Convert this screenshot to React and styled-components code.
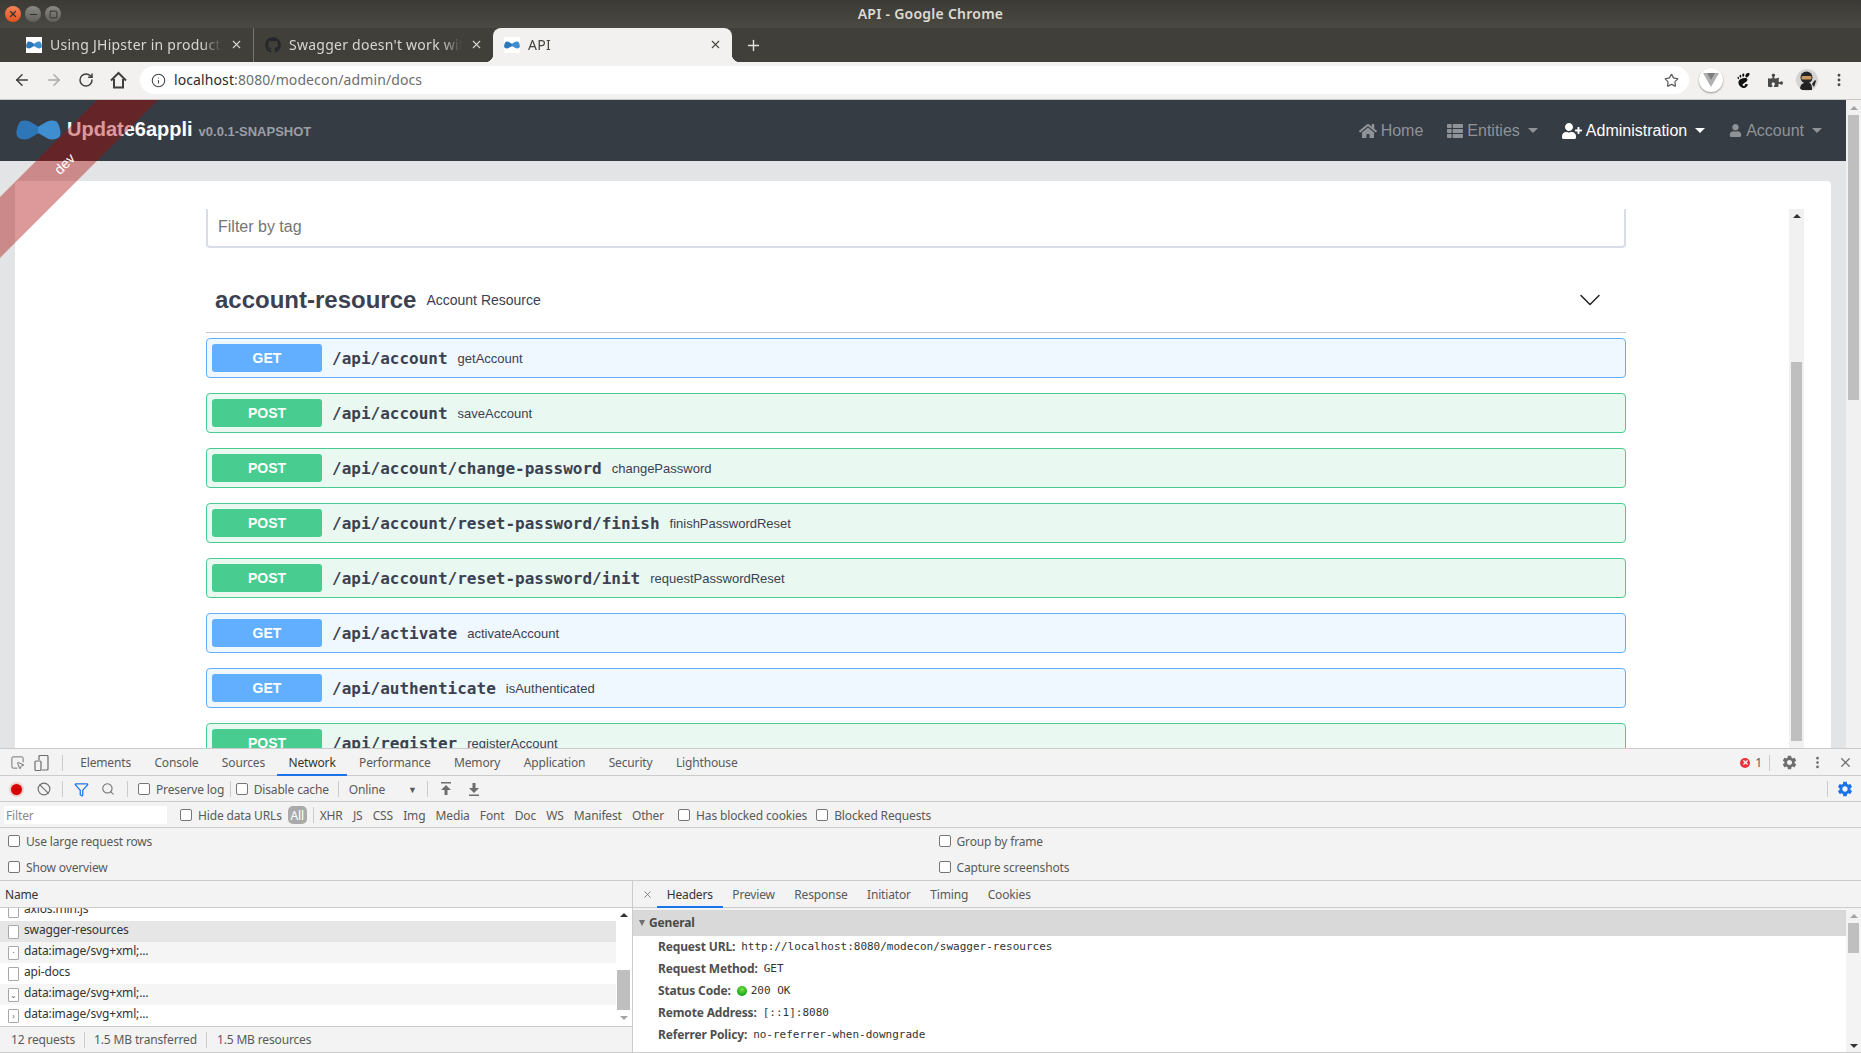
import React from "react";
import styled, { createGlobalStyle } from "styled-components";
import {
  ArrowLeft,
  ArrowRight,
  RotateCw,
  Info,
  Star,
  EllipsisVertical,
  X,
  Plus,
  Minus,
  Square,
  ChevronDown,
  Ban,
  Search,
  Filter,
  SquareMousePointer,
} from "lucide-react";
import { FaGithub, FaHome, FaThList, FaUserPlus, FaUser, FaPuzzlePiece } from "react-icons/fa";
import { MdSettings } from "react-icons/md";
import { SiGnome } from "react-icons/si";

const UI = `"Noto Sans", "Open Sans", sans-serif`;
const SANS = `"Liberation Sans", Arial, sans-serif`;
const MONO = `"DejaVu Sans Mono", "Liberation Mono", monospace`;

const operations = [
  { method: "GET", path: "/api/account", name: "getAccount" },
  { method: "POST", path: "/api/account", name: "saveAccount" },
  { method: "POST", path: "/api/account/change-password", name: "changePassword" },
  { method: "POST", path: "/api/account/reset-password/finish", name: "finishPasswordReset" },
  { method: "POST", path: "/api/account/reset-password/init", name: "requestPasswordReset" },
  { method: "GET", path: "/api/activate", name: "activateAccount" },
  { method: "GET", path: "/api/authenticate", name: "isAuthenticated" },
  { method: "POST", path: "/api/register", name: "registerAccount" },
];

const requests = [
  { name: "axios.min.js", tone: "#fff" },
  { name: "swagger-resources", tone: "#e6e6e6" },
  { name: "data:image/svg+xml;...", tone: "#f5f5f5", mark: "·" },
  { name: "api-docs", tone: "#fff" },
  { name: "data:image/svg+xml;...", tone: "#f5f5f5", mark: "⌄" },
  { name: "data:image/svg+xml;...", tone: "#fff", mark: "›" },
];

const GlobalStyle = createGlobalStyle`
  html, body {
    margin: 0;
    padding: 0;
    background: #fff;
  }
  * {
    box-sizing: border-box;
  }
`;

const Screen = styled.div`
  width: 1861px;
  height: 1053px;
  display: flex;
  flex-direction: column;
  overflow: hidden;
  font-family: ${UI};
`;

/* window + browser chrome */
const TitleBar = styled.div`
  height: 28px;
  flex: none;
  display: flex;
  align-items: center;
  justify-content: center;
  position: relative;
  padding-bottom: 2px;
  background: linear-gradient(#3b3a36, #4a4942);
  color: #dfdbd2;
  font-size: 14px;
  font-weight: 600;
  letter-spacing: 0.25px;
`;

const WindowButtons = styled.div`
  position: absolute;
  left: 5px;
  top: 6px;
  display: flex;
  gap: 4px;
`;

const WindowButton = styled.span`
  width: 16px;
  height: 16px;
  border-radius: 50%;
  display: flex;
  align-items: center;
  justify-content: center;
  background: ${(p) => (p.$close ? "linear-gradient(#f5835a, #e0521f)" : "linear-gradient(#8a8a84, #5f5e59)")};
  color: #33322e;
`;

const TabStrip = styled.div`
  height: 34px;
  flex: none;
  display: flex;
  align-items: stretch;
  padding-left: 15px;
  background: #403f3a;
`;

const Tab = styled.div`
  width: 239px;
  display: flex;
  align-items: center;
  gap: 8px;
  padding: 0 10px 1px 11px;
  position: relative;
  font-size: 14px;
  letter-spacing: 0.25px;
  color: ${(p) => (p.$active ? "#45443f" : "#d8d6d1")};
  background: ${(p) => (p.$active ? "#f2f1ef" : "transparent")};
  border-radius: ${(p) => (p.$active ? "8px 8px 0 0" : "0")};
  border-right: ${(p) => (p.$divider ? "1px solid #77766f" : "none")};
  ${(p) =>
    p.$active &&
    `
    &::before, &::after {
      content: "";
      position: absolute;
      bottom: 0;
      width: 8px;
      height: 8px;
    }
    &::before {
      left: -8px;
      background: radial-gradient(circle at 0 0, transparent 8px, #f2f1ef 8.5px);
    }
    &::after {
      right: -8px;
      background: radial-gradient(circle at 100% 0, transparent 8px, #f2f1ef 8.5px);
    }
  `}
`;

const TabTitle = styled.span`
  flex: 1;
  min-width: 0;
  overflow: hidden;
  white-space: nowrap;
  -webkit-mask-image: linear-gradient(to right, #000 88%, transparent);
  mask-image: linear-gradient(to right, #000 88%, transparent);
`;

const NewTab = styled.div`
  margin-left: 9px;
  width: 24px;
  display: flex;
  align-items: center;
  justify-content: center;
  color: #e4e2dd;
`;

const BrowserBar = styled.div`
  height: 38px;
  flex: none;
  display: flex;
  align-items: center;
  padding: 0 10px 1px 0;
  background: #f2f1ef;
  border-bottom: 1px solid #c9c8c5;
`;

const NavButton = styled.div`
  width: 32px;
  height: 28px;
  display: flex;
  align-items: center;
  justify-content: center;
  flex: none;
  color: ${(p) => (p.$off ? "#a9a9a9" : "#3f3f3f")};
`;

const BackGroup = styled.div`
  display: flex;
  padding-left: 6px;
  margin-right: 6px;
`;

const Omnibox = styled.div`
  width: 1549px;
  height: 28px;
  flex: none;
  display: flex;
  align-items: center;
  padding: 0 10px 0 11px;
  background: #fff;
  border-radius: 14px;
  font-size: 14px;
  letter-spacing: 0.1px;
  color: #6d6d6d;
`;

const Address = styled.span`
  flex: 1;
  margin: 0 0 2px 8px;
  b {
    font-weight: 400;
    color: #2b2b2b;
  }
`;

const VueBadge = styled.div`
  width: 24px;
  height: 24px;
  border-radius: 50%;
  background: #fff;
  box-shadow: 0 1px 2px rgba(0, 0, 0, 0.4);
  display: flex;
  align-items: center;
  justify-content: center;
`;

const Avatar = styled.div`
  width: 22px;
  height: 22px;
  border-radius: 50%;
  background: #d4d4d4;
  display: flex;
  align-items: center;
  justify-content: center;
  overflow: hidden;
`;

const Extensions = styled.div`
  display: flex;
  align-items: center;
  margin-left: 6px;
`;

/* the page */
const Page = styled.div`
  height: 648px;
  flex: none;
  display: flex;
  position: relative;
  overflow: hidden;
  background: #e3e4e6;
`;

const Ribbon = styled.div`
  position: absolute;
  left: 0;
  top: 0;
  width: 300px;
  height: 300px;
  overflow: hidden;
  pointer-events: none;
`;

const RibbonBand = styled.div`
  position: absolute;
  left: -86px;
  top: 42px;
  width: 300px;
  height: 43px;
  display: flex;
  align-items: center;
  justify-content: center;
  transform: rotate(-45deg);
  background: rgba(170, 0, 0, 0.4);
  color: #fff;
  font: 14px ${SANS};
`;

const PageMain = styled.div`
  flex: 1;
  min-width: 0;
  display: flex;
  flex-direction: column;
`;

const JhipsterNav = styled.div`
  height: 61px;
  flex: none;
  display: flex;
  align-items: center;
  justify-content: space-between;
  padding: 0 24px 0 16px;
  background: #363c44;
  font-family: ${SANS};
`;

const Brand = styled.div`
  display: flex;
  align-items: center;
  padding-bottom: 2px;
  color: #fff;
`;

const BrandName = styled.span`
  margin-left: 6px;
  font-size: 20px;
  font-weight: 700;
`;

const BrandVersion = styled.span`
  margin-left: 6px;
  margin-top: 4px;
  font-size: 13px;
  font-weight: 700;
  color: #9b9fa4;
`;

const Menu = styled.div`
  display: flex;
  align-items: center;
  gap: 24px;
`;

const MenuItem = styled.div`
  display: flex;
  align-items: center;
  gap: 4px;
  font-size: 16px;
  color: ${(p) => (p.$active ? "#fff" : "#8f9296")};
`;

const Caret = styled.span`
  margin-left: 4px;
  border-top: 5px solid currentColor;
  border-left: 5px solid transparent;
  border-right: 5px solid transparent;
`;

const Card = styled.div`
  flex: 1;
  min-height: 0;
  margin: 20px 15px 0;
  padding: 28px 27px 0 191px;
  display: flex;
  background: #fff;
  border-radius: 4px 4px 0 0;
  overflow: hidden;
  font-family: ${SANS};
`;

const Swagger = styled.div`
  width: 1420px;
  flex: none;
`;

const TagFilter = styled.div`
  height: 39px;
  display: flex;
  align-items: center;
  padding: 0 0 2px 10px;
  border: 2px solid #d8dde7;
  border-top: none;
  border-radius: 0 0 4px 4px;
  font-size: 16px;
  color: #757575;
`;

const TagHeader = styled.div`
  height: 85px;
  display: flex;
  align-items: center;
  padding: 20px 18px 0 9px;
  margin-bottom: 5px;
  border-bottom: 1px solid #c6c8cf;
  color: #3b4151;
`;

const TagName = styled.span`
  font-size: 24px;
  font-weight: 700;
`;

const TagNote = styled.span`
  flex: 1;
  margin-left: 10px;
  font-size: 14px;
`;

const Operations = styled.div`
  display: flex;
  flex-direction: column;
  gap: 15px;
`;

const Operation = styled.div`
  height: 40px;
  flex: none;
  display: flex;
  align-items: center;
  padding: 0 5px;
  border: 1px solid ${(p) => (p.$method === "GET" ? "#61affe" : "#49cc90")};
  border-radius: 4px;
  background: ${(p) => (p.$method === "GET" ? "#eff7ff" : "#e9f8f1")};
  color: #3b4151;
`;

const Method = styled.span`
  width: 110px;
  height: 28px;
  flex: none;
  display: flex;
  align-items: center;
  justify-content: center;
  border-radius: 3px;
  background: ${(p) => (p.$method === "GET" ? "#61affe" : "#49cc90")};
  color: #fff;
  font-size: 14px;
  font-weight: 700;
`;

const OpPath = styled.span`
  margin-left: 10px;
  font-family: ${MONO};
  font-size: 16px;
  font-weight: 700;
`;

const OpName = styled.span`
  margin-left: 10px;
  font-size: 13px;
`;

const InnerTrack = styled.div`
  width: 15px;
  flex: none;
  margin-left: 163px;
  position: relative;
  background: #f1f1f1;
`;

const Arrow = styled.span`
  position: absolute;
  left: 50%;
  transform: translateX(-50%);
  border-left: 4px solid transparent;
  border-right: 4px solid transparent;
  ${(p) => (p.$down ? `border-top: 4px solid ${p.$color};` : `border-bottom: 4px solid ${p.$color};`)}
  ${(p) => (p.$down ? `bottom: ${p.$at}px;` : `top: ${p.$at}px;`)}
`;

const InnerThumb = styled.div`
  position: absolute;
  left: 2px;
  right: 2px;
  top: 153px;
  height: 379px;
  background: #bfbfbf;
`;

const PageTrack = styled.div`
  width: 15px;
  flex: none;
  position: relative;
  background: #f1f1f1;
`;

const PageThumb = styled.div`
  position: absolute;
  left: 2px;
  right: 2px;
  top: 15px;
  height: 285px;
  background: #bfbfbf;
`;

/* devtools */
const DevTools = styled.div`
  flex: 1;
  min-height: 0;
  display: flex;
  flex-direction: column;
  background: #f3f3f3;
  color: #5a5a5a;
  font-size: 12px;
  letter-spacing: -0.15px;
  white-space: nowrap;
`;

const Bar = styled.div`
  height: ${(p) => p.$h}px;
  flex: none;
  display: flex;
  align-items: center;
  padding-top: 1px;
  padding-left: ${(p) => p.$pad || 0}px;
  padding-right: ${(p) => p.$padRight || 0}px;
  border-top: ${(p) => (p.$top ? "1px solid #ccc" : "none")};
  border-bottom: 1px solid #ccc;
`;

const Spacer = styled.div`
  flex: 1;
`;

const Sep = styled.span`
  width: 1px;
  height: 16px;
  flex: none;
  margin: ${(p) => p.$m || "0 8px"};
  background: #ccc;
`;

const PanelTab = styled.div`
  height: 100%;
  display: flex;
  align-items: center;
  padding: 0 ${(p) => p.$pad || 11.7}px;
  margin-bottom: -1px;
  color: ${(p) => (p.$active ? "#333" : "#5a5a5a")};
  border-bottom: 2px solid ${(p) => (p.$active ? "#1a73e8" : "transparent")};
`;

const IconSlot = styled.span`
  width: ${(p) => p.$w || 28}px;
  flex: none;
  display: flex;
  align-items: center;
  justify-content: center;
  color: ${(p) => p.$color || "#6e6e6e"};
`;

const RecordDot = styled.span`
  width: 11px;
  height: 11px;
  border-radius: 50%;
  background: #d50000;
  box-shadow: 0 0 0 2px rgba(213, 0, 0, 0.15);
`;

const Check = styled.input.attrs({ type: "checkbox" })`
  appearance: none;
  width: 12px;
  height: 12px;
  flex: none;
  margin: 0 6px 0 0;
  background: #fff;
  border: 1px solid #767676;
  border-radius: 2px;
`;

const CheckLabel = styled.label`
  display: flex;
  align-items: center;
  margin-left: ${(p) => p.$left || 0}px;
`;

const FilterBox = styled.div`
  width: 163px;
  height: 18px;
  margin-left: 4px;
  padding-left: 2px;
  display: flex;
  align-items: center;
  background: #fff;
  color: #8a8a8a;
`;

const AllPill = styled.span`
  width: 19px;
  height: 18px;
  margin-left: 6px;
  display: flex;
  align-items: center;
  justify-content: center;
  border-radius: 5px;
  background: #aaa;
  color: #fff;
`;

const TypeFilters = styled.div`
  display: flex;
  gap: 10.2px;
`;

const Throttle = styled.span`
  width: 68px;
  display: flex;
  justify-content: space-between;
  align-items: center;
  i {
    font-style: normal;
    font-size: 9px;
  }
`;

const SettingsGrid = styled.div`
  height: 52px;
  flex: none;
  display: grid;
  grid-template-columns: 1fr 1fr;
  grid-auto-rows: 26px;
`;

const SettingCell = styled.div`
  display: flex;
  align-items: center;
  padding-left: 8px;
`;

const ErrorBadge = styled.span`
  width: 10px;
  height: 10px;
  border-radius: 50%;
  background: #e8333c;
  color: #fff;
  display: flex;
  align-items: center;
  justify-content: center;
  margin-right: 5px;
`;

const Split = styled.div`
  flex: 1;
  min-height: 0;
  display: flex;
  border-top: 1px solid #ccc;
  border-bottom: 1px solid #ccc;
`;

const LeftPane = styled.div`
  width: 633px;
  flex: none;
  display: flex;
  flex-direction: column;
  border-right: 1px solid #ccc;
`;

const NameHead = styled.div`
  height: 27px;
  flex: none;
  display: flex;
  align-items: center;
  padding-left: 5px;
  color: #333;
  border-bottom: 1px solid #ccc;
`;

const ListWrap = styled.div`
  flex: 1;
  min-height: 0;
  display: flex;
  overflow: hidden;
  background: #fff;
`;

const RequestList = styled.div`
  flex: 1;
  min-width: 0;
  display: flex;
  flex-direction: column;
  justify-content: flex-end;
  overflow: hidden;
`;

const RequestRow = styled.div`
  height: 21px;
  flex: none;
  display: flex;
  align-items: center;
  padding: 0 0 4px 8px;
  background: ${(p) => p.$tone};
  color: #333;
`;

const FileIcon = styled.span`
  width: 11px;
  height: 14px;
  flex: none;
  margin: 4px 5px 0 0;
  display: flex;
  align-items: center;
  justify-content: center;
  background: #fff;
  border: 1px solid #a8a8a8;
  border-radius: 1px;
  color: #666;
  font-size: 8px;
  line-height: 1;
`;

const ListTrack = styled.div`
  width: 16px;
  flex: none;
  position: relative;
  background: #fff;
`;

const ListThumb = styled.div`
  position: absolute;
  left: 1px;
  right: 2px;
  top: 62px;
  height: 40px;
  background: #bfbfbf;
`;

const StatusBar = styled.div`
  height: 26px;
  flex: none;
  display: flex;
  align-items: center;
  padding-left: 11px;
  border-top: 1px solid #ccc;
`;

const RightPane = styled.div`
  flex: 1;
  min-width: 0;
  display: flex;
  flex-direction: column;
`;

const DetailBody = styled.div`
  flex: 1;
  min-height: 0;
  display: flex;
  margin-top: 2px;
  background: #fff;
`;

const DetailMain = styled.div`
  flex: 1;
  min-width: 0;
`;

const SectionHead = styled.div`
  height: 26px;
  display: flex;
  align-items: center;
  padding: 0 0 1px 5px;
  background: #d9d9d9;
  color: #4a4a4a;
  font-weight: 700;
`;

const SectionArrow = styled.span`
  margin: 1px 4px 0 1px;
  border-top: 6px solid #6e6e6e;
  border-left: 3.5px solid transparent;
  border-right: 3.5px solid transparent;
`;

const HeaderRows = styled.div`
  padding: 0 0 0 25px;
`;

const HeaderRow = styled.div`
  height: 22px;
  display: flex;
  align-items: center;
  padding-bottom: 1px;
`;

const HeaderKey = styled.span`
  font-weight: 700;
  color: #4f4f4f;
  margin-right: 6px;
`;

const HeaderValue = styled.span`
  font-family: ${MONO};
  font-size: 11px;
  letter-spacing: 0;
  color: #333;
`;

const StatusDot = styled.span`
  width: 10px;
  height: 10px;
  margin-right: 4px;
  border-radius: 50%;
  background: radial-gradient(circle at 50% 35%, #7be04a, #12a812 70%);
`;

const DetailTrack = styled.div`
  width: 15px;
  flex: none;
  position: relative;
  background: #f3f3f3;
`;

const DetailThumb = styled.div`
  position: absolute;
  left: 2px;
  right: 2px;
  top: 13px;
  height: 30px;
  background: #bfbfbf;
`;

const Bowtie = ({ w, h }) => (
  <svg width={w} height={h} viewBox="0 0 45 20">
    <path
      d="M8 .5C13 0 18 4 23 7v6c-6 3-10 7-15 6.500-4-.5-7-1.500-7.500-5.500C0 11 2 4 4 2 5 1 6 .7 8 .5Z"
      fill="#2e76b6"
    />
    <path
      d="M37 .5C32 0 27 4 22 7v6c6 3 10 7 15 6.500 4-.5 7-1.500 7.500-5.500C45 11 43 4 41 2 40 1 39 .7 37 .5Z"
      fill="#3f8ed0"
    />
  </svg>
);

const Favicon = styled.span`
  width: 16px;
  height: 16px;
  flex: none;
  display: flex;
  align-items: center;
  justify-content: center;
  background: #fff;
`;

const HomeOutline = () => (
  <svg width="17" height="18" viewBox="0 0 17 18" fill="none" stroke="currentColor" strokeWidth="2">
    <path d="M1 9.500 8.500 2 16 9.500M4 8v8.500h9V8" />
  </svg>
);

const StepArrow = ({ down }) => (
  <svg width="12" height="14" viewBox="0 0 12 14" fill="#6e6e6e">
    {down ? (
      <path d="M4.500 1h3v5H11L6 11 1 6h3.500ZM1 12.500h10V14H1Z" />
    ) : (
      <path d="M1 0h10v1.500H1ZM6 3l5 5H7.500v5h-3V8H1Z" />
    )}
  </svg>
);

const Device = () => (
  <svg width="16" height="16" viewBox="0 0 16 16" fill="none" stroke="#6e6e6e" strokeWidth="1.200">
    <rect x="1" y="6" width="6" height="9.500" rx="1" />
    <path d="M5 5V1.500a1 1 0 0 1 1-1h7a1 1 0 0 1 1 1V14a1 1 0 0 1-1 1H8" />
  </svg>
);

const Ninja = () => (
  <svg width="18" height="20" viewBox="0 0 18 20">
    <path d="M2 20c0-4 1-6 4-7h5c2 0 3 2 3 7Z" fill="#222" />
    <circle cx="8.500" cy="7.500" r="6" fill="#262626" />
    <rect x="3.500" y="6" width="10" height="3.500" rx="1" fill="#c9975f" />
    <path d="M14 14l3-4 1 1-2 6Z" fill="#222" />
  </svg>
);

const App = () => (
  <Screen>
    <GlobalStyle />
    <TitleBar>
      <WindowButtons>
        <WindowButton $close>
          <X size={10} strokeWidth={3} />
        </WindowButton>
        <WindowButton>
          <Minus size={11} strokeWidth={2.500} />
        </WindowButton>
        <WindowButton>
          <Square size={9} strokeWidth={2.500} />
        </WindowButton>
      </WindowButtons>
      API - Google Chrome
    </TitleBar>

    <TabStrip>
      <Tab $divider>
        <Favicon>
          <Bowtie w={16} h={8} />
        </Favicon>
        <TabTitle>Using JHipster in production</TabTitle>
        <X size={13} strokeWidth={2} />
      </Tab>
      <Tab>
        <FaGithub size={16} color="#23272b" />
        <TabTitle>Swagger doesn't work with context path</TabTitle>
        <X size={13} strokeWidth={2} />
      </Tab>
      <Tab $active>
        <Favicon>
          <Bowtie w={16} h={8} />
        </Favicon>
        <TabTitle>API</TabTitle>
        <X size={13} strokeWidth={2} />
      </Tab>
      <NewTab>
        <Plus size={17} strokeWidth={2} />
      </NewTab>
    </TabStrip>

    <BrowserBar>
      <BackGroup>
        <NavButton>
          <ArrowLeft size={18} strokeWidth={2} />
        </NavButton>
        <NavButton $off>
          <ArrowRight size={18} strokeWidth={2} />
        </NavButton>
        <NavButton>
          <RotateCw size={16} strokeWidth={2.200} />
        </NavButton>
        <NavButton>
          <HomeOutline />
        </NavButton>
      </BackGroup>
      <Omnibox>
        <Info size={15} strokeWidth={1.700} color="#444" />
        <Address>
          <b>localhost</b>:8080/modecon/admin/docs
        </Address>
        <Star size={15} strokeWidth={2} color="#5f5f5f" />
      </Omnibox>
      <Extensions>
        <NavButton>
          <VueBadge>
            <svg width="16" height="14" viewBox="0 0 16 14">
              <path d="M0 0h16L8 14Z" fill="#b0b0b0" />
              <path d="M4 0h8L8 7Z" fill="#7d7d7d" />
            </svg>
          </VueBadge>
        </NavButton>
        <NavButton>
          <SiGnome size={15} color="#111" />
        </NavButton>
        <NavButton>
          <FaPuzzlePiece size={15} color="#4a4a4a" />
        </NavButton>
        <NavButton>
          <Avatar>
            <Ninja />
          </Avatar>
        </NavButton>
        <NavButton>
          <EllipsisVertical size={16} strokeWidth={2.400} color="#4a4a4a" />
        </NavButton>
      </Extensions>
    </BrowserBar>

    <Page>
      <PageMain>
        <JhipsterNav>
          <Brand>
            <Bowtie w={45} h={20} />
            <BrandName>Update6appli</BrandName>
            <BrandVersion>v0.0.1-SNAPSHOT</BrandVersion>
          </Brand>
          <Menu>
            <MenuItem>
              <FaHome size={18} />
              Home
            </MenuItem>
            <MenuItem>
              <FaThList size={16} />
              Entities
              <Caret />
            </MenuItem>
            <MenuItem $active>
              <FaUserPlus size={20} />
              Administration
              <Caret />
            </MenuItem>
            <MenuItem>
              <FaUser size={13} />
              Account
              <Caret />
            </MenuItem>
          </Menu>
        </JhipsterNav>
        <Card>
          <Swagger>
            <TagFilter>Filter by tag</TagFilter>
            <TagHeader>
              <TagName>account-resource</TagName>
              <TagNote>Account Resource</TagNote>
              <ChevronDown size={36} strokeWidth={1} color="#222" />
            </TagHeader>
            <Operations>
              {operations.map((op) => (
                <Operation key={op.method + op.path} $method={op.method}>
                  <Method $method={op.method}>{op.method}</Method>
                  <OpPath>{op.path}</OpPath>
                  <OpName>{op.name}</OpName>
                </Operation>
              ))}
            </Operations>
          </Swagger>
          <InnerTrack>
            <Arrow $at={5} $color="#333" />
            <InnerThumb />
          </InnerTrack>
        </Card>
      </PageMain>
      <PageTrack>
        <Arrow $at={6} $color="#a3a3a3" />
        <PageThumb />
      </PageTrack>
      <Ribbon>
        <RibbonBand>dev</RibbonBand>
      </Ribbon>
    </Page>

    <DevTools>
      <Bar $h={28} $top $pad={6} $padRight={2}>
        <IconSlot $w={22}>
          <SquareMousePointer size={15} strokeWidth={1.500} />
        </IconSlot>
        <IconSlot $w={28}>
          <Device />
        </IconSlot>
        <Sep $m="0 5.500px 0 6px" />
        {["Elements", "Console", "Sources", "Network", "Performance", "Memory", "Application", "Security", "Lighthouse"].map((t) => (
          <PanelTab key={t} $active={t === "Network"}>
            {t}
          </PanelTab>
        ))}
        <Spacer />
        <ErrorBadge>
          <X size={7} strokeWidth={4} />
        </ErrorBadge>
        1
        <Sep $m="0 5px 0 7px" />
        <IconSlot $w={28}>
          <MdSettings size={17} />
        </IconSlot>
        <IconSlot $w={28}>
          <EllipsisVertical size={15} strokeWidth={2.400} />
        </IconSlot>
        <IconSlot $w={28}>
          <X size={15} strokeWidth={2} />
        </IconSlot>
      </Bar>

      <Bar $h={26} $padRight={4}>
        <IconSlot $w={32}>
          <RecordDot />
        </IconSlot>
        <IconSlot $w={24}>
          <Ban size={14} strokeWidth={2} />
        </IconSlot>
        <Sep $m="0 6px" />
        <IconSlot $w={24} $color="#1a73e8">
          <Filter size={15} strokeWidth={2} />
        </IconSlot>
        <IconSlot $w={30}>
          <Search size={14} strokeWidth={1.800} />
        </IconSlot>
        <Sep $m="0 10px 0 4px" />
        <CheckLabel>
          <Check />
          Preserve log
        </CheckLabel>
        <Sep $m="0 5px 0 5.500px" />
        <CheckLabel>
          <Check />
          Disable cache
        </CheckLabel>
        <Sep $m="0 9.500px" />
        <Throttle>
          Online <i>▼</i>
        </Throttle>
        <Sep $m="0 10px" />
        <IconSlot $w={16}>
          <StepArrow />
        </IconSlot>
        <IconSlot $w={12} />
        <IconSlot $w={16}>
          <StepArrow down />
        </IconSlot>
        <Spacer />
        <Sep $m="0 5px" />
        <IconSlot $w={24} $color="#1a73e8">
          <MdSettings size={18} />
        </IconSlot>
      </Bar>

      <Bar $h={26}>
        <FilterBox>Filter</FilterBox>
        <CheckLabel $left={13}>
          <Check />
          Hide data URLs
        </CheckLabel>
        <AllPill>All</AllPill>
        <Sep $m="0 6px 0 6px" />
        <TypeFilters>
          {["XHR", "JS", "CSS", "Img", "Media", "Font", "Doc", "WS", "Manifest", "Other"].map((t) => (
            <span key={t}>{t}</span>
          ))}
        </TypeFilters>
        <CheckLabel $left={14}>
          <Check />
          Has blocked cookies
        </CheckLabel>
        <CheckLabel $left={9}>
          <Check />
          Blocked Requests
        </CheckLabel>
      </Bar>

      <SettingsGrid>
        <SettingCell>
          <Check />
          Use large request rows
        </SettingCell>
        <SettingCell>
          <Check />
          Group by frame
        </SettingCell>
        <SettingCell>
          <Check />
          Show overview
        </SettingCell>
        <SettingCell>
          <Check />
          Capture screenshots
        </SettingCell>
      </SettingsGrid>

      <Split>
        <LeftPane>
          <NameHead>Name</NameHead>
          <ListWrap>
            <RequestList>
              {requests.map((r, i) => (
                <RequestRow key={i} $tone={r.tone}>
                  <FileIcon>{r.mark}</FileIcon>
                  {r.name}
                </RequestRow>
              ))}
            </RequestList>
            <ListTrack>
              <Arrow $at={5} $color="#333" />
              <ListThumb />
              <Arrow $down $at={6} $color="#a3a3a3" />
            </ListTrack>
          </ListWrap>
          <StatusBar>
            12 requests
            <Sep $m="0 9px" />
            1.5 MB transferred
            <Sep $m="0 10px 0 9px" />
            1.5 MB resources
          </StatusBar>
        </LeftPane>

        <RightPane>
          <Bar $h={27} $pad={4}>
            <IconSlot $w={20}>
              <X size={11} strokeWidth={1.800} />
            </IconSlot>
            <PanelTab $pad={9.700} $active>
              Headers
            </PanelTab>
            {["Preview", "Response", "Initiator", "Timing", "Cookies"].map((t) => (
              <PanelTab key={t} $pad={9.700}>
                {t}
              </PanelTab>
            ))}
          </Bar>
          <DetailBody>
            <DetailMain>
              <SectionHead>
                <SectionArrow />
                General
              </SectionHead>
              <HeaderRows>
                <HeaderRow>
                  <HeaderKey>Request URL:</HeaderKey>
                  <HeaderValue>http://localhost:8080/modecon/swagger-resources</HeaderValue>
                </HeaderRow>
                <HeaderRow>
                  <HeaderKey>Request Method:</HeaderKey>
                  <HeaderValue>GET</HeaderValue>
                </HeaderRow>
                <HeaderRow>
                  <HeaderKey>Status Code:</HeaderKey>
                  <StatusDot />
                  <HeaderValue>200 OK</HeaderValue>
                </HeaderRow>
                <HeaderRow>
                  <HeaderKey>Remote Address:</HeaderKey>
                  <HeaderValue>[::1]:8080</HeaderValue>
                </HeaderRow>
                <HeaderRow>
                  <HeaderKey>Referrer Policy:</HeaderKey>
                  <HeaderValue>no-referrer-when-downgrade</HeaderValue>
                </HeaderRow>
              </HeaderRows>
            </DetailMain>
            <DetailTrack>
              <Arrow $at={4} $color="#a3a3a3" />
              <DetailThumb />
              <Arrow $down $at={4} $color="#333" />
            </DetailTrack>
          </DetailBody>
        </RightPane>
      </Split>
    </DevTools>
  </Screen>
);

export default App;
